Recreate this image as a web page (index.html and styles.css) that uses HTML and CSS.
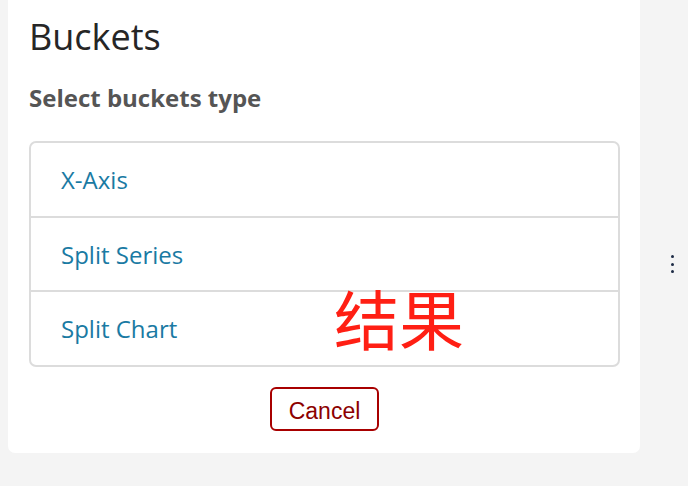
FILE: index.html
```html
<!DOCTYPE html>
<html lang="en">
<head>
<meta charset="utf-8">
<title>Buckets</title>
<link rel="stylesheet" href="styles.css">
</head>
<body>
<div class="page">
  <div class="card">
    <h1 class="title">Buckets</h1>
    <h2 class="subtitle">Select buckets type</h2>
    <ul class="types">
      <li class="type">X-Axis</li>
      <li class="type">Split Series</li>
      <li class="type">Split Chart</li>
    </ul>
    <div class="actions">
      <button class="cancel" type="button">Cancel</button>
    </div>
    <span class="note">结果</span>
  </div>
  <div class="side">
    <span class="kebab"><i></i><i></i><i></i></span>
  </div>
  <div class="edge"></div>
</div>
</body>
</html>
```

FILE: styles.css
```css
html, body {
  margin: 0;
  padding: 0;
  height: 100%;
}
body {
  background: #f4f4f4;
  font-family: "Open Sans", "Noto Sans", sans-serif;
  overflow: hidden;
}
.page {
  display: flex;
  height: 486px;
  padding-left: 8px;
  box-sizing: border-box;
}
.card {
  position: relative;
  width: 632px;
  height: 453px;
  box-sizing: border-box;
  background: #fff;
  border-radius: 0 0 7px 7px;
  padding: 12px 20px 0 21px;
  display: flex;
  flex-direction: column;
}
.title {
  margin: 0;
  font-size: 36px;
  font-weight: 400;
  color: #262626;
  line-height: 49px;
}
.subtitle {
  margin: 21px 0 0;
  font-size: 24px;
  font-weight: 700;
  color: #555;
  line-height: 32px;
}
.types {
  list-style: none;
  margin: 27px 0 0;
  padding: 0;
  border: 2px solid #dcdcdc;
  border-radius: 7px;
}
.type {
  height: 72.5px;
  box-sizing: border-box;
  padding: 1px 0 0 30px;
  display: flex;
  align-items: center;
  font-size: 24px;
  color: #1a7aa3;
}
.type + .type {
  border-top: 2px solid #dcdcdc;
  height: 74.5px;
}
.actions {
  display: flex;
  justify-content: center;
  margin-top: 20px;
}
.cancel {
  height: 44px;
  box-sizing: border-box;
  padding: 4px 17px 0;
  border: 2px solid #a80000;
  border-radius: 6px;
  background: #fff;
  color: #8c0000;
  font-family: "Liberation Sans", Arial, sans-serif;
  font-size: 23px;
  line-height: 36px;
}
.note {
  position: absolute;
  left: 326px;
  top: 285px;
  font-family: "Noto Sans CJK SC", sans-serif;
  font-size: 65px;
  line-height: 1;
  color: #ff1f14;
}
.side {
  width: 48px;
  display: flex;
  justify-content: flex-end;
  padding: 255px 14px 0 0;
  box-sizing: border-box;
}
.kebab {
  display: flex;
  flex-direction: column;
  gap: 4.5px;
}
.kebab i {
  display: block;
  width: 3px;
  height: 3px;
  border-radius: 50%;
  background: #1d2b45;
}
.edge {
  width: 5px;
  background: #fff;
}
```
